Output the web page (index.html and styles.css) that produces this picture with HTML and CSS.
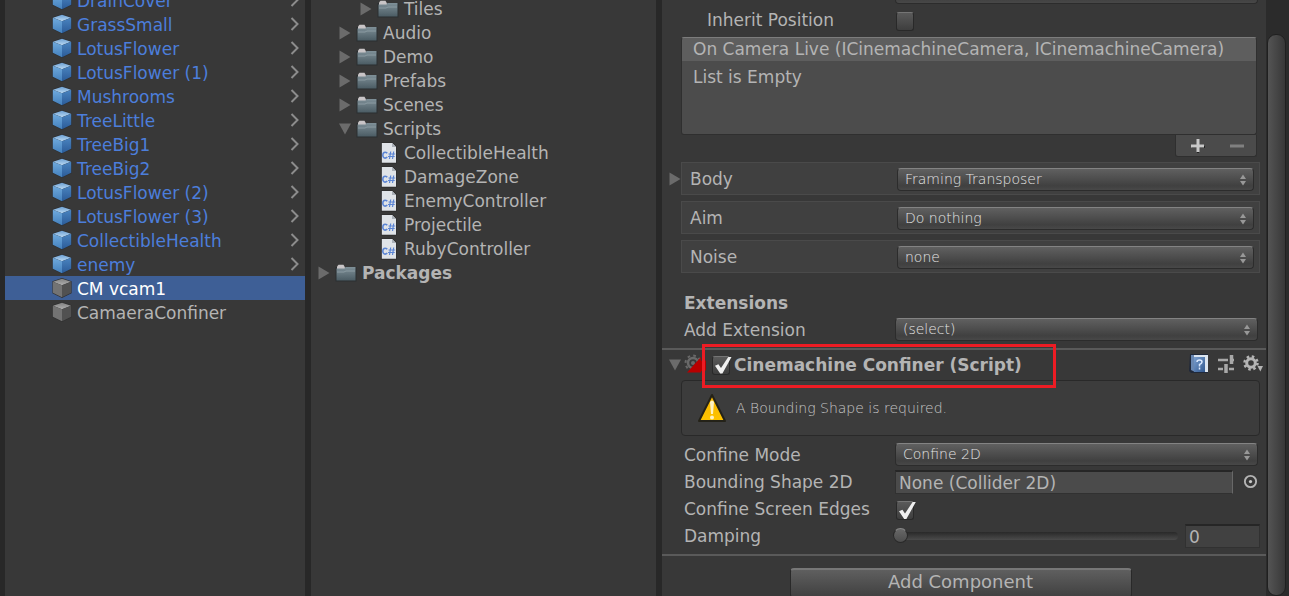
FILE: index.html
```html
<!DOCTYPE html>
<html lang="en">
<head>
<meta charset="utf-8">
<title>Editor</title>
<link rel="stylesheet" href="styles.css">
</head>
<body>
<svg class="defs" aria-hidden="true">
  <defs>
    <linearGradient id="blueTop" x1="0" y1="0" x2="0" y2="1"><stop offset="0" stop-color="#6c9fd2"/><stop offset="1" stop-color="#bbdaf4"/></linearGradient>
    <linearGradient id="blueLeft" x1="0" y1="0" x2="0" y2="1"><stop offset="0" stop-color="#70aadd"/><stop offset="1" stop-color="#4380bd"/></linearGradient>
    <linearGradient id="blueRight" x1="0" y1="0" x2="0" y2="1"><stop offset="0" stop-color="#4a84c0"/><stop offset="1" stop-color="#2b5b98"/></linearGradient>
    <linearGradient id="grayTop" x1="0" y1="0" x2="0" y2="1"><stop offset="0" stop-color="#808080"/><stop offset="1" stop-color="#b0b0b0"/></linearGradient>
    <linearGradient id="folderFill" x1="0" y1="0" x2="0" y2="1"><stop offset="0" stop-color="#7f9098"/><stop offset="1" stop-color="#4b5c64"/></linearGradient>
    <linearGradient id="bookFill" x1="0" y1="0" x2="1" y2="1"><stop offset="0" stop-color="#7ba0d0"/><stop offset="1" stop-color="#31588f"/></linearGradient>
    <linearGradient id="warnFill" x1="0" y1="0" x2="0" y2="1"><stop offset="0" stop-color="#f3b300"/><stop offset="1" stop-color="#ffc400"/></linearGradient>
    <symbol id="prefab" viewBox="0 0 20 20">
      <path d="M10 0 19.600 3.200V15.300L10 20 .4 15.300V3.200z" fill="#2d3034"/>
      <path d="M10 .7 19 3.800 10 7.300 1 3.800z" fill="url(#blueTop)"/>
      <path d="M.8 3.800 10 7.200V19.200L.8 14.800z" fill="url(#blueLeft)"/>
      <path d="M10 7.200 19.200 3.800V14.800L10 19.200z" fill="url(#blueRight)"/>
    </symbol>
    <symbol id="object" viewBox="0 0 20 20">
      <path d="M10 0 19.600 3.200V15.300L10 20 .4 15.300V3.200z" fill="#303030"/>
      <path d="M10 .7 19 3.800 10 7.300 1 3.800z" fill="url(#grayTop)"/>
      <path d="M.8 3.800 10 7.200V19.200L.8 14.800z" fill="#737373"/>
      <path d="M10 7.200 19.200 3.800V14.800L10 19.200z" fill="#515151"/>
    </symbol>
    <symbol id="chevron" viewBox="0 0 10 14"><path d="M1.500 1 7.500 7l-6 6" fill="none" stroke="#8c8c8c" stroke-width="2"/></symbol>
    <symbol id="closed" viewBox="0 0 12 14"><path d="M.5.500 11.500 7 .5 13.500z" fill="#6b6b6b"/></symbol>
    <symbol id="opened" viewBox="0 0 12 12"><path d="M0 .500h12L6 11.500z" fill="#6b6b6b"/></symbol>
    <symbol id="folder" viewBox="0 0 22 18">
      <path d="M.5 3h21v14.500H.5z" fill="#2a2e30"/>
      <path d="M2 5V2.500L3.500.800h5L10 3.500V5z" fill="#c9c5c7"/>
      <path d="M1.500 4.500h8l1-1.500h10v13.500h-19z" fill="url(#folderFill)"/>
      <path d="M2 8h7l2-1h9" fill="none" stroke="#8b9ba2" stroke-width="1"/>
    </symbol>
    <symbol id="script" viewBox="0 0 16 22">
      <path d="M0 .500h11.500l4 4v17H0z" fill="#282828"/>
      <path d="M.8 1h10.400L15 5v15.800H.8z" fill="#dfe3e8"/>
      <path d="M11 1v4h4z" fill="#aab0b8"/>
      <path d="M6.300 11.200c-2.500-2-4.500-.5-4.500 2s2 4 4.500 2" fill="none" stroke="#5a84d4" stroke-width="1.600"/>
      <path d="M9.700 9.500 8.500 17M12.700 9.500 11.500 17M7.500 12h6.700M7 14.500h6.700" stroke="#5a84d4" stroke-width="1.200"/>
    </symbol>
    <symbol id="updown" viewBox="0 0 8 12"><path d="M4 .5 7 5H1zM4 11.500 1 7h6z" fill="#989898"/></symbol>
  </defs>
</svg>
<div class="editor">
  <nav class="panel hierarchy" aria-label="Hierarchy">
    <ul class="tree">
      <li class="item prefab"><svg class="cube"><use href="#prefab"/></svg><span>DrainCover</span><svg class="chevron"><use href="#chevron"/></svg></li>
      <li class="item prefab"><svg class="cube"><use href="#prefab"/></svg><span>GrassSmall</span><svg class="chevron"><use href="#chevron"/></svg></li>
      <li class="item prefab"><svg class="cube"><use href="#prefab"/></svg><span>LotusFlower</span><svg class="chevron"><use href="#chevron"/></svg></li>
      <li class="item prefab"><svg class="cube"><use href="#prefab"/></svg><span>LotusFlower (1)</span><svg class="chevron"><use href="#chevron"/></svg></li>
      <li class="item prefab"><svg class="cube"><use href="#prefab"/></svg><span>Mushrooms</span><svg class="chevron"><use href="#chevron"/></svg></li>
      <li class="item prefab"><svg class="cube"><use href="#prefab"/></svg><span>TreeLittle</span><svg class="chevron"><use href="#chevron"/></svg></li>
      <li class="item prefab"><svg class="cube"><use href="#prefab"/></svg><span>TreeBig1</span><svg class="chevron"><use href="#chevron"/></svg></li>
      <li class="item prefab"><svg class="cube"><use href="#prefab"/></svg><span>TreeBig2</span><svg class="chevron"><use href="#chevron"/></svg></li>
      <li class="item prefab"><svg class="cube"><use href="#prefab"/></svg><span>LotusFlower (2)</span><svg class="chevron"><use href="#chevron"/></svg></li>
      <li class="item prefab"><svg class="cube"><use href="#prefab"/></svg><span>LotusFlower (3)</span><svg class="chevron"><use href="#chevron"/></svg></li>
      <li class="item prefab"><svg class="cube"><use href="#prefab"/></svg><span>CollectibleHealth</span><svg class="chevron"><use href="#chevron"/></svg></li>
      <li class="item prefab"><svg class="cube"><use href="#prefab"/></svg><span>enemy</span><svg class="chevron"><use href="#chevron"/></svg></li>
      <li class="item selected"><svg class="cube"><use href="#object"/></svg><span>CM vcam1</span></li>
      <li class="item"><svg class="cube"><use href="#object"/></svg><span>CamaeraConfiner</span></li>
    </ul>
  </nav>
  <nav class="panel project" aria-label="Project">
    <ul class="tree">
      <li class="item level-2"><svg class="fold"><use href="#closed"/></svg><svg class="folder"><use href="#folder"/></svg><span>Tiles</span></li>
      <li class="item level-1"><svg class="fold"><use href="#closed"/></svg><svg class="folder"><use href="#folder"/></svg><span>Audio</span></li>
      <li class="item level-1"><svg class="fold"><use href="#closed"/></svg><svg class="folder"><use href="#folder"/></svg><span>Demo</span></li>
      <li class="item level-1"><svg class="fold"><use href="#closed"/></svg><svg class="folder"><use href="#folder"/></svg><span>Prefabs</span></li>
      <li class="item level-1"><svg class="fold"><use href="#closed"/></svg><svg class="folder"><use href="#folder"/></svg><span>Scenes</span></li>
      <li class="item level-1"><svg class="fold"><use href="#opened"/></svg><svg class="folder"><use href="#folder"/></svg><span>Scripts</span></li>
      <li class="item file"><svg class="script"><use href="#script"/></svg><span>CollectibleHealth</span></li>
      <li class="item file"><svg class="script"><use href="#script"/></svg><span>DamageZone</span></li>
      <li class="item file"><svg class="script"><use href="#script"/></svg><span>EnemyController</span></li>
      <li class="item file"><svg class="script"><use href="#script"/></svg><span>Projectile</span></li>
      <li class="item file"><svg class="script"><use href="#script"/></svg><span>RubyController</span></li>
      <li class="item root"><svg class="fold"><use href="#closed"/></svg><svg class="folder"><use href="#folder"/></svg><span>Packages</span></li>
    </ul>
  </nav>
  <main class="panel inspector">
    <div class="row first-row"><span></span><div class="dropdown"><select aria-label="Blend hint"><option></option></select><svg><use href="#updown"/></svg></div></div>
    <div class="row"><label class="nested" for="inherit">Inherit Position</label><input class="check" type="checkbox" id="inherit"></div>
    <section class="events">
      <h2 class="events-title">On Camera Live (ICinemachineCamera, ICinemachineCamera)</h2>
      <p class="events-body">List is Empty</p>
      <div class="events-tools">
        <button type="button" aria-label="Add"><svg viewBox="0 0 14 14"><path d="M7 1v13M1 8h13" stroke="#222" stroke-width="2"/><path d="M7 0v13M0 7h13" stroke="#c8c8c8" stroke-width="3"/></svg></button>
        <button type="button" aria-label="Remove"><svg viewBox="0 0 14 14"><path d="M0 7h14" stroke="#808080" stroke-width="3"/></svg></button>
      </div>
    </section>
    <div class="stages">
      <div class="stage"><svg class="stage-fold"><use href="#closed"/></svg><label for="body">Body</label><div class="dropdown"><select id="body"><option>Framing Transposer</option></select><svg><use href="#updown"/></svg></div></div>
      <div class="stage"><label for="aim">Aim</label><div class="dropdown"><select id="aim"><option>Do nothing</option></select><svg><use href="#updown"/></svg></div></div>
      <div class="stage"><label for="noise">Noise</label><div class="dropdown"><select id="noise"><option>none</option></select><svg><use href="#updown"/></svg></div></div>
    </div>
    <h2 class="row extensions">Extensions</h2>
    <div class="row"><label for="ext">Add Extension</label><div class="dropdown"><select id="ext"><option>(select)</option></select><svg><use href="#updown"/></svg></div></div>
    <header class="component">
      <svg class="fold"><use href="#opened"/></svg>
      <svg class="cm-icon" viewBox="0 0 24 24">
        <circle cx="9" cy="10" r="5" fill="none" stroke="#696969" stroke-width="2.500"/>
        <circle cx="9" cy="10" r="7.500" fill="none" stroke="#696969" stroke-width="2" stroke-dasharray="2.700 3.190"/>
        <circle cx="9" cy="10" r="2" fill="#696969"/>
        <path d="M3 19.500 17 4v4l3-2 2 2v9l-2 2-3-1v1.500z" fill="#b80000"/>
      </svg>
      <div class="component-name"><input class="check" type="checkbox" id="confiner" checked><label for="confiner">Cinemachine Confiner (Script)</label></div>
      <div class="component-tools">
        <button type="button" aria-label="Help"><svg viewBox="0 0 20 20"><path d="M1 0h18v19H2L0 17z" fill="#20293a"/><path d="M2 1h4v17L2 16z" fill="#6887b2"/><path d="M5 1h14v17h-3V3H5z" fill="#dce5ef"/><path d="M5 3h11v15H5z" fill="url(#bookFill)"/><path d="M8 8q0-2 2.500-2T13 8q0 1.500-2.500 2.500v2M10.500 13.500v2" fill="none" stroke="#dceaff" stroke-width="1.500"/></svg></button>
        <button type="button" aria-label="Presets"><svg viewBox="0 0 20 20"><path d="M2 6h10M15 6h3M2 15h5M13 15h5" stroke="#a8a8a8" stroke-width="2.500"/><path d="M15.500 1v9M10 10v9" stroke="#a8a8a8" stroke-width="3.500"/></svg></button>
        <button type="button" aria-label="Settings"><svg viewBox="0 0 20 20"><circle cx="8" cy="9" r="4.300" fill="none" stroke="#b4b4b4" stroke-width="3"/><circle cx="8" cy="9" r="6.500" fill="none" stroke="#b4b4b4" stroke-width="2.500" stroke-dasharray="2.500 2.605"/><path d="M14.500 12h5.500l-2.700 5.500z" fill="#b4b4b4"/></svg></button>
      </div>
    </header>
    <div class="notice">
      <svg viewBox="0 0 30 30"><path d="M15 2 28 28H2z" fill="url(#warnFill)" stroke="#242218" stroke-width="2" stroke-linejoin="round"/><path d="M13 9q2-3 4 0l-1 12h-2z" fill="#fff2c3"/><circle cx="15" cy="24.500" r="2" fill="#fff2c3"/></svg>
      <span>A Bounding Shape is required.</span>
    </div>
    <div class="row"><label for="mode">Confine Mode</label><div class="dropdown"><select id="mode"><option>Confine 2D</option></select><svg><use href="#updown"/></svg></div></div>
    <div class="row"><label for="shape">Bounding Shape 2D</label><div class="object-field"><input class="text" type="text" id="shape" value="None (Collider 2D)" readonly><button type="button" aria-label="Pick object"><svg viewBox="0 0 12 12"><circle cx="6" cy="6" r="4.500" fill="none" stroke="#b4b4b4" stroke-width="1.500"/><circle cx="6" cy="6" r="1.300" fill="#c8c8c8"/></svg></button></div></div>
    <div class="row"><label for="edges">Confine Screen Edges</label><input class="check" type="checkbox" id="edges" checked></div>
    <div class="row"><label for="damping">Damping</label><div class="slider-field"><input class="slider" type="range" id="damping" min="0" max="10" value="0"><input class="text number" type="text" value="0" aria-label="Damping value"></div></div>
    <footer class="add"><button type="button">Add Component</button></footer>
  </main>
  <div class="scrollbar"><div class="scroll-thumb"></div></div>
</div>
</body>
</html>
```
FILE: styles.css
```css
* { box-sizing: border-box; }
body {
  margin: 0;
  background: #282828;
  color: #b4b4b4;
  font: 17px/24px "DejaVu Sans", sans-serif;
}
.defs { position: absolute; width: 0; height: 0; }
h2, p, ul { margin: 0; padding: 0; }
h2 { font-size: 17px; font-weight: normal; }
button, input, select { font: inherit; color: inherit; margin: 0; }
button { border: 0; padding: 0; background: none; }
svg { flex: none; display: block; }

.editor {
  display: grid;
  grid-template-columns: 5px 300fr 6px 345fr 6px 604fr 23px;
  height: 100vh;
  overflow: hidden;
}
.panel { background: #383838; overflow: hidden; min-width: 0; }
.hierarchy { grid-column: 2; }
.project { grid-column: 4; }
.inspector { grid-column: 6; }

/* Trees */
.tree { list-style: none; }
.hierarchy .tree { margin-top: -12px; }
.project .tree { margin-top: -3px; }
.item { display: flex; align-items: center; height: 24px; white-space: nowrap; }
.hierarchy .item { padding: 0 5px 0 47px; gap: 5px; }
.hierarchy .item span { padding-top: 2px; }
.item.prefab { color: #4c7edb; }
.item.selected { background: #3e5f96; color: #fff; }
.cube { width: 20px; height: 20px; }
.chevron { width: 10px; height: 14px; margin-left: auto; }
.project .item { gap: 5px; }
.fold { width: 12px; height: 14px; }
.folder { width: 22px; height: 18px; }
.script { width: 16px; height: 22px; }
.root { padding-left: 7px; font-weight: bold; }
.level-1 { padding-left: 28px; }
.level-2 { padding-left: 49px; }
.project .file { padding-left: 70px; gap: 7px; }

/* Inspector */
.row {
  display: grid;
  grid-template-columns: 211px 1fr;
  align-items: center;
  height: 27px;
  padding: 0 8px 0 22px;
  white-space: nowrap;
}
.first-row { margin-top: -21px; }
.nested { padding-left: 23px; }
.dropdown { position: relative; display: grid; }
.dropdown svg { position: absolute; right: 7px; top: 6px; width: 8px; height: 12px; pointer-events: none; }
.dropdown select {
  appearance: none;
  width: 100%;
  height: 23px;
  padding: 0 20px 2px 7px;
  border: 1px solid #2c2c2c;
  border-top-color: #838383;
  border-radius: 4px;
  background: linear-gradient(#606060, #404040 80%, #484848);
  color: #e4e4e4;
  font-size: 14px;
  font-weight: 200;
  line-height: 18px;
}
.check {
  appearance: none;
  width: 18px;
  height: 19px;
  border: 1px solid #292929;
  border-top-color: #757575;
  border-radius: 3px;
  background: linear-gradient(#5a5a5a, #3e3e3e);
}
.row .check { margin-top: 4px; margin-left: 1px; }
.check:checked::before {
  content: "";
  display: block;
  width: 20px;
  height: 17px;
  background: #f0f0f0;
  clip-path: polygon(10% 55%, 27% 45%, 40% 68%, 78% 0, 94% 0, 47% 100%, 36% 100%);
}

.events { display: grid; margin: 4px 9px 5px 19px; }
.events-title {
  height: 24px;
  padding-left: 11px;
  border: 1px solid #2f2f2f;
  border-top-color: #7c7c7c;
  border-bottom: 0;
  border-radius: 3px 3px 0 0;
  background: #5e5e5e;
  line-height: 22px;
  white-space: nowrap;
}
.events-body {
  height: 74px;
  padding: 4px 11px;
  border: 1px solid #2f2f2f;
  border-top: 0;
  border-radius: 0 0 3px 3px;
  background: #4c4c4c;
}
.events-tools {
  justify-self: end;
  display: grid;
  grid-template-columns: 1fr 1fr;
  width: 82px;
  height: 22px;
  padding-left: 2px;
  border: 1px solid #2f2f2f;
  border-top: 0;
  border-radius: 0 0 3px 3px;
  background: #4b4b4b;
}
.events-tools button { display: grid; place-items: center; }
.events-tools svg { width: 14px; height: 14px; }

.stages { display: grid; gap: 6px; margin: 0 6px 16px 19px; }
.stage {
  position: relative;
  display: grid;
  grid-template-columns: 207px 1fr;
  align-items: center;
  height: 33px;
  padding: 0 5px 0 8px;
  border: 1px solid #4a4a4a;
  background: #404040;
}
.stage .dropdown { margin-top: 2px; }
.stage-fold { position: absolute; left: -13px; top: 9px; width: 12px; height: 14px; }
.extensions { font-weight: bold; }

.component {
  display: flex;
  align-items: center;
  height: 32px;
  margin-top: 5px;
  padding: 0 3px 0 7px;
  border-top: 2px solid #5a5a5a;
}
.cm-icon { width: 24px; height: 24px; margin-left: 3px; }
.component-name {
  position: relative;
  display: flex;
  align-items: center;
  gap: 4px;
  margin-left: 4px;
  font-weight: bold;
  white-space: nowrap;
}
.component-name::after {
  content: "";
  position: absolute;
  inset: -9px -34px -11px -10px;
  border: 3px solid #ed1c24;
  pointer-events: none;
}
.component-tools { display: flex; gap: 7px; margin-left: auto; padding-bottom: 3px; }
.component-tools svg { width: 20px; height: 20px; }
.notice {
  display: flex;
  align-items: center;
  gap: 9px;
  height: 56px;
  margin: 0 6px 5px 19px;
  padding-left: 15px;
  border: 1px solid #292929;
  border-radius: 4px;
  background: #3c3c3c;
  color: #c6c6c6;
  font-size: 14px;
  font-weight: 200;
}
.notice svg { width: 30px; height: 30px; }

.text {
  min-width: 0;
  height: 24px;
  padding: 2px 3px 0;
  border: 1px solid #313131;
  border-top: 2px solid #262626;
  background: #4b4b4b;
}
.object-field { display: flex; align-items: center; gap: 10px; }
.object-field .text { flex: 1; border-right-color: #686868; }
.object-field svg { width: 15px; height: 15px; }
.slider-field { display: flex; align-items: center; gap: 7px; margin-right: -2px; }
.slider { appearance: none; flex: 1; min-width: 0; height: 20px; margin-left: -2px; background: none; }
.slider::-webkit-slider-runnable-track { height: 8px; border-radius: 4px; background: linear-gradient(#292929, #4b4b4b); }
.slider::-webkit-slider-thumb {
  appearance: none;
  width: 15px;
  height: 15px;
  margin-top: -4px;
  border: 1px solid #292929;
  border-top-color: #888;
  border-radius: 8px;
  background: linear-gradient(#686868, #4d4d4d);
}
.number { width: 75px; background: #414141; }
.add { margin-top: 5px; padding: 12px 7px 0 0; border-top: 2px solid #5a5a5a; text-align: center; }
.add button {
  width: 342px;
  height: 30px;
  border: 1px solid #292929;
  border-top: 2px solid #777;
  border-radius: 4px;
  background: linear-gradient(#5f5f5f, #404040);
  font-size: 18px;
  line-height: 20px;
  padding-bottom: 4px;
}

.scrollbar { grid-column: 7; padding: 34px 3px 0 1px; background: #2b2b2b; }
.scroll-thumb {
  height: 100%;
  border: 1px solid #202020;
  border-radius: 9px;
  background: linear-gradient(90deg, #545454, #383838);
}
```
